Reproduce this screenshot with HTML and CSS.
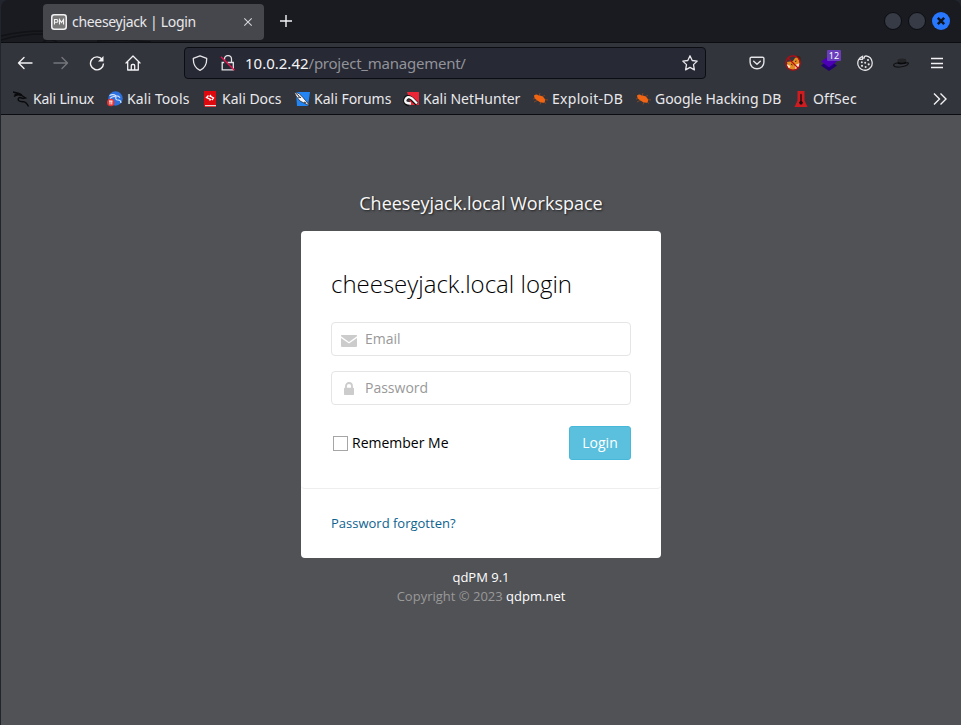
FILE: index.html
```html
<!DOCTYPE html>
<html lang="en">
<head>
<meta charset="utf-8">
<title>cheeseyjack | Login</title>
<link rel="stylesheet" href="styles.css">
</head>
<body>
<div class="window">
  <header class="titlebar">
    <svg class="dragon" width="160" height="42" viewBox="0 0 160 42" fill="none" stroke="#101216" stroke-width="1.5"><path d="M0 36Q20 31 43 31M0 40Q20 34 43 34M42 42Q48 37 56 42M96 41Q120 39 150 42"/></svg>
    <div class="tab">
      <svg width="16" height="16" viewBox="0 0 16 16"><rect x=".75" y=".75" width="14.5" height="14.5" rx="2.5" fill="#777" stroke="#f1f1f1" stroke-width="1.5"/><path d="M3.500 10.500V5.500h2a1.300 1.300 0 0 1 0 2.800h-2M8.500 10.500v-5l2 3 2-3v5" fill="none" stroke="#f4f4f4" stroke-width="1.100"/></svg>
      <span class="tab-title">cheeseyjack | Login</span>
      <svg class="tab-close" width="10" height="10" viewBox="0 0 10 10" stroke="#d4d4d8" stroke-width="1.100"><path d="M1.300 1.300l7.400 7.400M8.700 1.300L1.300 8.700"/></svg>
    </div>
    <svg class="newtab" width="12" height="12" viewBox="0 0 12 12" stroke="#f4f4f6" stroke-width="1.400"><path d="M6 0v12M0 6h12"/></svg>
    <div class="controls">
      <i class="dot"></i><i class="dot"></i>
      <svg width="18" height="18" viewBox="0 0 18 18"><circle cx="9" cy="9" r="9" fill="#2777ff"/><path d="M5.800 5.800l6.400 6.400M12.200 5.800l-6.400 6.400" stroke="#10151f" stroke-width="2.500"/></svg>
    </div>
  </header>

  <nav class="toolbar">
    <svg class="back" width="16" height="16" viewBox="0 0 16 16" fill="none" stroke="#f2f2f4" stroke-width="1.400" stroke-linecap="round" stroke-linejoin="round"><path d="M15 8H1.500M7 2.500L1.500 8 7 13.500"/></svg>
    <svg class="forward" width="16" height="16" viewBox="0 0 16 16" fill="none" stroke="#74767c" stroke-width="1.400" stroke-linecap="round" stroke-linejoin="round"><path d="M1 8h13.500M9 2.500L14.500 8 9 13.500"/></svg>
    <svg class="reload" width="16" height="16" viewBox="0 0 16 16" fill="none" stroke="#f2f2f4" stroke-width="1.400"><path d="M13.300 4.600A6.500 6.500 0 1 0 14.500 8.500"/><path d="M14.500 1v5.500H9z" fill="#f2f2f4" stroke="none"/></svg>
    <svg class="home" width="16" height="16" viewBox="0 0 16 16" fill="none" stroke="#f2f2f4" stroke-width="1.300" stroke-linecap="round" stroke-linejoin="round"><path d="M1 8l7-7 7 7M2.700 7v8h10.600V7M6.300 15v-4.500a1 1 0 0 1 1-1h1.400a1 1 0 0 1 1 1V15"/></svg>
    <div class="urlbar">
      <svg width="16" height="16" viewBox="0 0 16 16" fill="none" stroke="#e4e4e8" stroke-width="1.300" stroke-linejoin="round"><path d="M8 .8l6.700 2.600C14.900 9.600 12.500 13.400 8 15.400 3.500 13.400 1.100 9.600 1.300 3.400z"/></svg>
      <svg class="lock-off" width="16" height="16" viewBox="0 0 16 16" fill="none" stroke="#e4e4e8" stroke-width="1.300"><path d="M4.500 4.800V4a3.500 3.500 0 0 1 7 0v3.500M7.500 7.500h5.800v7.300H2.200V7.500h2"/><path d="M1 1.800l13.500 13.500" stroke="#e3164f" stroke-width="1.500"/></svg>
      <span class="url"><b>10.0.2.42</b>/project_management/</span>
      <svg class="star" width="16" height="16" viewBox="0 0 16 16" fill="none" stroke="#e8e8ec" stroke-width="1.300" stroke-linejoin="round"><path d="M8 .8l2.200 4.700 5 .6-3.700 3.500.9 5.300L8 12.400l-4.400 2.500.9-5.300L.8 6.100l5-.6z"/></svg>
    </div>
    <div class="extensions">
      <svg width="16" height="16" viewBox="0 0 16 16" fill="none" stroke="#e4e4e8" stroke-width="1.400" stroke-linecap="round" stroke-linejoin="round"><path d="M2.500 2.200h11a1.400 1.400 0 0 1 1.400 1.400v3.700a6.900 6.500 0 0 1-13.800 0V3.600a1.400 1.400 0 0 1 1.400-1.400zM4.700 6.200L8 9.300l3.300-3.100"/></svg>
      <svg width="16" height="16" viewBox="0 0 16 16"><path d="M2 7l6-1 2-3 4-2 .5 7-2 5.500L8 15l-5-2z" fill="#e08a1f"/><path d="M1.500 9l4 2-1.500 3zM10 10l5-2-1.500 5-3 1z" fill="#f6e6cc"/><path d="M12 1l3 1v4zM6 9l1.500 1M10 6.500l1.500-.5" fill="#3b2412" stroke="#3b2412"/><circle cx="8" cy="8" r="7.200" fill="none" stroke="#b80b13" stroke-width="1.300"/><path d="M3 3l10 10" stroke="#b80b13" stroke-width="1.200"/></svg>
      <div class="stack"><svg width="16" height="16" viewBox="0 0 16 16"><path d="M0 10.500L8 5l8 5.500L8 16z" fill="#220073"/><path d="M0 6.500L8 1l8 5.500-8 5.700z" fill="#4b00b5"/></svg><span class="badge">12</span></div>
      <svg width="16" height="16" viewBox="0 0 16 16" fill="none" stroke="#e2e2e5" stroke-width="1.300"><path d="M5.500 1.300a7.200 7.200 0 1 0 9.600 5.700 7.200 7.200 0 0 0-6-6.100q-2 .2-2 2.300-1.800.2-1.600-1.900zM5.500 2v2.300H2.500"/><g fill="#e2e2e5" stroke="none"><circle cx="4.800" cy="7.200" r="1"/><circle cx="8.200" cy="7.800" r="1"/><circle cx="11" cy="5" r="1.100"/><circle cx="5" cy="10.800" r="1.100"/><circle cx="8.600" cy="12" r="1"/><circle cx="11.700" cy="9.300" r="1.100"/></g></svg>
      <svg width="16" height="16" viewBox="0 0 16 16"><path d="M4.500 4.500q4-1.500 8.500-.5l.5 4Q9 10 4.500 8.500z" fill="#222426"/><path d="M4.500 7q4.500 1.500 8.700-.3l.3 1.800q-4.500 1.500-9 .2z" fill="#08090a"/><path d="M4.500 8Q.5 8.500.6 10.200q1 2.300 6.400 1.800 7-.6 8.500-3.500-.3-1-2-.8" fill="none" stroke="#111214" stroke-width="1.200"/></svg>
      <svg width="16" height="16" viewBox="0 0 16 16" stroke="#f2f2f4" stroke-width="1.300"><path d="M2 3.500h12M2 8.500h12M2 12.500h12"/></svg>
    </div>
  </nav>

  <div class="bookmarks">
    <a class="bm b1"><svg width="16" height="16" viewBox="0 0 16 16" fill="none" stroke="#090a0c" stroke-width="1.400"><path d="M0 1l6 1.500 3 1.500M1 5.500Q4 2.500 8.500 4.500M8 4l4.500 3L10 7.500 7 6.500Q4.500 7 5.500 9.500q2 1.500 5 1.200 3 .3 5 4.800M1.500 3.500l4-.5"/></svg><span>Kali Linux</span></a>
    <a class="bm b2"><svg width="16" height="16" viewBox="0 0 16 16"><circle cx="8.500" cy="7.500" r="7.200" fill="#2d71df"/><path d="M2.500 4.500Q6 2.500 9 4.800q3 0 4 2M3 7.500q3-3 6-1.500-1 3 2 3t3 3" fill="none" stroke="#d7e7ff" stroke-width="1.100"/><circle cx="3.800" cy="11.500" r="3.800" fill="#e23636"/><path d="M2 10h3.500M3 10v3.500M4.800 10v3.500" stroke="#fff" stroke-width=".9"/></svg><span>Kali Tools</span></a>
    <a class="bm b3"><svg width="16" height="16" viewBox="0 0 16 16"><path d="M2 0h12v16H3.500A1.500 1.500 0 0 1 2 14.500z" fill="#dd090e"/><path d="M3 14h11v1.300H3z" fill="#eed5d5"/><path d="M6.500 4.500L4.500 6.500l4 2-1 1M10 9l1.500-2L8 5l1-1" fill="none" stroke="#fff" stroke-width="1.300"/></svg><span>Kali Docs</span></a>
    <a class="bm b4"><svg width="16" height="16" viewBox="0 0 16 16"><path d="M2 1h14l-2 14H3z" fill="#2385f4"/><path d="M0 1l5 1.500 4 4 2.500 3L16 15l-6-3-4-2-4-5z" fill="#f7f7fa" stroke="#16191e" stroke-width=".7"/><path d="M1.500 2l4 3.500M4 6l3 .5M10 11l2 1" fill="none" stroke="#111722" stroke-width=".9"/></svg><span>Kali Forums</span></a>
    <a class="bm b5"><svg width="16" height="16" viewBox="0 0 16 16"><path d="M4 1h12v13H8z" fill="#ed2637"/><path d="M14 13L9 8Q4 4 2.500 8T6 13.500" fill="none" stroke="#111" stroke-width="4"/><path d="M14 12.500L9 7.500Q4 4.500 2.500 8.500T8 12.500" fill="none" stroke="#f8f8f8" stroke-width="2.300"/></svg><span>Kali NetHunter</span></a>
    <a class="bm b6"><svg width="16" height="16" viewBox="0 0 16 16"><use href="#bug"/></svg><span>Exploit-DB</span></a>
    <a class="bm b7"><svg width="16" height="16" viewBox="0 0 16 16"><g id="bug"><path d="M1 8l4-1M7 5l1-3M10 5.500l3-1M12 8.500l4 .5M6 9l-4 2M9 11l-1 2.500M12 11l2 1.500" stroke="#87451f" stroke-width=".9"/><path d="M2 4.500q2.500-2 4.500 0 4-.3 6 3 1.500 2.500-.5 4.300-4 .2-6.500-2.300Q2 7.500 2 4.500z" fill="#ef6514"/></g></svg><span>Google Hacking DB</span></a>
    <a class="bm b8"><svg width="16" height="16" viewBox="0 0 16 16"><path d="M4.500 0h7v9.500l3 6.500h-13l3-6.500z" fill="#cf1c20"/><path d="M7.300 3.500q.7-1.500 1.400 0V10l1.300 1.500L9 13.500H7L6 11.500 7.300 10z" fill="#170f11"/></svg><span>OffSec</span></a>
    <svg class="more" width="14" height="12" viewBox="0 0 14 12" fill="none" stroke="#f2f2f4" stroke-width="1.400"><path d="M1 .5L6.500 6 1 11.500M7.500 .5L13 6l-5.500 5.500"/></svg>
  </div>

  <main class="page">
    <div class="brand"><span>Cheeseyjack.local Workspace</span></div>
    <form class="card">
      <div class="login">
        <h1><span>cheeseyjack.local login</span></h1>
        <label class="field"><svg width="16" height="12" viewBox="0 0 16 12" fill="#ccc"><path d="M1 0h14a1 1 0 0 1 1 1.300L8 7 0 1.300A1 1 0 0 1 1 0z"/><path d="M0 3l8 5.500L16 3v8a1 1 0 0 1-1 1H1a1 1 0 0 1-1-1z"/></svg><input type="text" placeholder="Email"></label>
        <label class="field"><svg class="lock" width="16" height="13" viewBox="0 0 16 13"><path d="M5 6V4a3 3 0 0 1 6 0v2" fill="none" stroke="#ccc" stroke-width="1.800"/><rect x="3" y="5.700" width="10" height="7.300" rx=".7" fill="#ccc"/></svg><input type="password" placeholder="Password"></label>
        <div class="actions"><label class="remember"><i class="check"></i><span>Remember Me</span></label><button type="button">Login</button></div>
      </div>
      <div class="forgot"><a>Password forgotten?</a></div>
    </form>
    <footer><p><a>qdPM 9.1</a></p><p>Copyright © 2023 <a>qdpm.net</a></p></footer>
  </main>
</div>
</body>
</html>
```
FILE: styles.css
```css
* { box-sizing: border-box; }
body { margin: 0; background: #23252e; font-family: "Open Sans", "Noto Sans", sans-serif; }
svg { display: block; flex: none; }
.window { width: 961px; height: 725px; display: flex; flex-direction: column; overflow: hidden; border-left: 1px solid #23252e; border-radius: 8px 8px 0 0; font-family: "Noto Sans", sans-serif; }
.titlebar { position: relative; flex: none; height: 43px; display: flex; align-items: center; padding: 0 11px 0 42px; background: #1a1b20; border-bottom: 1px solid #0c0d11; }
.dragon { position: absolute; left: 0; top: 0; }
.tab { position: relative; width: 221px; height: 36px; margin-top: 1px; display: flex; align-items: center; padding: 0 11px 0 8px; background: #45474d; border-radius: 4px; }
.tab-title { margin-left: 5px; color: #e8e8ea; font-size: 14px; letter-spacing: -.32px; white-space: nowrap; }
.tab-close { margin-left: auto; }
.newtab { margin-left: 16px; }
.controls { display: flex; gap: 6px; margin-left: auto; }
.dot { width: 18px; height: 18px; border-radius: 50%; background: #363b46; border: 1px solid #0c0d11; }
.toolbar { flex: none; height: 41px; display: flex; align-items: center; padding: 0 16px 0 16px; background: #33353c; }
.toolbar > svg { margin-top: -1px; }
.toolbar > .back { margin-left: 0; }
.toolbar > .forward, .toolbar > .home { margin-left: 20px; }
.toolbar > .reload { margin-left: 20px; }
.urlbar { width: 522px; height: 32px; margin-top: -1px; margin-left: 43px; display: flex; align-items: center; padding: 0 7px; background: #272934; border: 1px solid #0c0d12; border-radius: 4px; }
.lock-off { margin-left: 12px; }
.url { margin-left: 9px; color: #92939a; font-size: 15px; letter-spacing: -.24px; line-height: 20px; white-space: nowrap; }
.url b { color: #f4f4f6; font-weight: 400; letter-spacing: 0; }
.star { margin-left: auto; }
.extensions { flex: 1; margin: -1px 0 0 43px; display: flex; justify-content: space-between; }
.stack { position: relative; }
.badge { position: absolute; left: 6px; top: -5px; width: 14px; height: 11px; border-radius: 1px; background: #6a3dbd; color: #fff; font-size: 9px; line-height: 11px; text-align: center; }
.bookmarks { flex: none; height: 31px; display: flex; align-items: center; padding-left: 12px; background: #33353c; border-bottom: 1px solid #0c0d12; }
.bm { flex: none; display: flex; align-items: center; gap: 4px; color: #e9e9ec; font-size: 14px; line-height: 20px; white-space: nowrap; }
.b1 { width: 94px; letter-spacing: -.2px; } .b2 { width: 95px; letter-spacing: .1px; } .b3 { width: 92px; } .b4 { width: 109px; }
.b5 { width: 129px; } .b6 { width: 103px; letter-spacing: .28px; } .b7 { width: 158px; letter-spacing: -.05px; } .b8 { letter-spacing: .15px; }
.more { margin: 0 14px 0 auto; }
.page { flex: 1; display: flex; flex-direction: column; align-items: center; background: #515256; font-family: "Open Sans", "Noto Sans", sans-serif; }
.brand { height: 116px; padding-top: 75px; color: #f8f8f8; font-size: 18px; line-height: 26px; text-shadow: 1px 1px 2px #222; }
.card { width: 360px; height: 327px; background: #fff; border-radius: 4px; }
.login { height: 258px; padding: 34px 30px 0; border-bottom: 1px solid #eee; border-radius: 4px; }
h1 { margin: 0 0 20px; color: #000; font-size: 24px; font-weight: 300; line-height: 37px; white-space: nowrap; }
.field { width: 300px; height: 34px; margin-bottom: 15px; display: flex; align-items: center; padding: 0 9px; border: 1px solid #e5e5e5; border-radius: 4px; }
.field svg { margin-top: 4px; }
.field .lock { margin-top: 1px; }
.field input { flex: 1; min-width: 0; margin: 0 0 0 8px; padding: 0; border: 0; outline: 0; background: transparent; font: 14px/20px "Open Sans", sans-serif; }
.field input::placeholder { color: #999; opacity: 1; }
.actions { margin-top: 21px; display: flex; justify-content: space-between; align-items: center; }
.remember { display: flex; align-items: center; gap: 4px; padding-left: 2px; color: #000; font-size: 14px; line-height: 20px; }
.remember span { margin-top: -1px; }
.check { width: 15px; height: 15px; border: 1px solid #a6a6a6; }
button { width: 62px; height: 34px; padding: 0; border: 1px solid #46b8da; border-radius: 3px; background: #5bc0de; color: #fff; font: 14px/20px "Open Sans", sans-serif; }
.forgot { padding: 24px 30px; color: #0d638f; font-size: 13px; line-height: 20px; }
footer { padding-top: 10px; color: #999; font-size: 13px; line-height: 19px; text-align: center; }
footer p { margin: 0; }
footer a { color: #fff; }
```
